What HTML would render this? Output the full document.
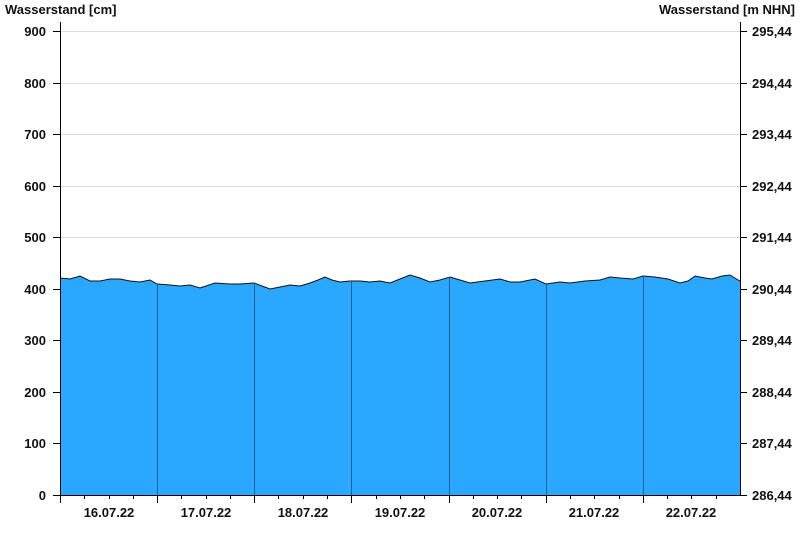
<!DOCTYPE html>
<html><head><style>body{margin:0;background:#fff}svg{display:block}text{font-family:"Liberation Sans",Arial,sans-serif;font-weight:bold;font-size:13px;fill:#111}</style></head><body>
<svg width="800" height="550" viewBox="0 0 800 550">
<g stroke="#ddd" stroke-width="1">
<line x1="60" x2="740" y1="31.5" y2="31.5"/><line x1="60" x2="740" y1="83.5" y2="83.5"/><line x1="60" x2="740" y1="134.5" y2="134.5"/><line x1="60" x2="740" y1="186.5" y2="186.5"/><line x1="60" x2="740" y1="237.5" y2="237.5"/>
</g>
<polygon fill="#2aa8ff" stroke="none" points="60,495 60,278 70,279 80,276 90,281 100,281 110,279 120,279 130,281 140,282 150,280 157,284 170,285 180,286 190,285 200,288 215,283 230,284 240,284 254,283 262,286 270,289 280,287 290,285 300,286 310,283 318,280 325,277 332,280 340,282 350,281 360,281 370,282 380,281 390,283 400,279 410,275 420,278 430,282 440,280 450,277 460,280 470,283 485,281 500,279 510,282 520,282 535,279 546,284 560,282 570,283 585,281 600,280 610,277 620,278 633,279 643,276 655,277 668,279 680,283 688,281 695,276 705,278 712,279 722,276 730,275 738,280 740,281 740,495"/>
<polyline fill="none" stroke="#111" stroke-width="1" points="60,278 70,279 80,276 90,281 100,281 110,279 120,279 130,281 140,282 150,280 157,284 170,285 180,286 190,285 200,288 215,283 230,284 240,284 254,283 262,286 270,289 280,287 290,285 300,286 310,283 318,280 325,277 332,280 340,282 350,281 360,281 370,282 380,281 390,283 400,279 410,275 420,278 430,282 440,280 450,277 460,280 470,283 485,281 500,279 510,282 520,282 535,279 546,284 560,282 570,283 585,281 600,280 610,277 620,278 633,279 643,276 655,277 668,279 680,283 688,281 695,276 705,278 712,279 722,276 730,275 738,280 740,281"/>
<g stroke="#1d5f8a" stroke-width="1">
<line x1="157.5" x2="157.5" y1="284" y2="495"/><line x1="254.5" x2="254.5" y1="283" y2="495"/><line x1="351.5" x2="351.5" y1="281" y2="495"/><line x1="449.5" x2="449.5" y1="277" y2="495"/><line x1="546.5" x2="546.5" y1="284" y2="495"/><line x1="643.5" x2="643.5" y1="276" y2="495"/>
</g>
<g stroke="#000" stroke-width="1">
<line x1="60.5" x2="60.5" y1="22" y2="503"/><line x1="740.5" x2="740.5" y1="22" y2="495"/><line x1="53" x2="740" y1="495.5" y2="495.5"/>
<line x1="53" x2="60" y1="31.5" y2="31.5"/><line x1="53" x2="60" y1="83.5" y2="83.5"/><line x1="53" x2="60" y1="134.5" y2="134.5"/><line x1="53" x2="60" y1="186.5" y2="186.5"/><line x1="53" x2="60" y1="237.5" y2="237.5"/><line x1="53" x2="60" y1="289.5" y2="289.5"/><line x1="53" x2="60" y1="340.5" y2="340.5"/><line x1="53" x2="60" y1="392.5" y2="392.5"/><line x1="53" x2="60" y1="443.5" y2="443.5"/>
<line x1="740" x2="747" y1="31.5" y2="31.5"/><line x1="740" x2="747" y1="83.5" y2="83.5"/><line x1="740" x2="747" y1="134.5" y2="134.5"/><line x1="740" x2="747" y1="186.5" y2="186.5"/><line x1="740" x2="747" y1="237.5" y2="237.5"/><line x1="740" x2="747" y1="289.5" y2="289.5"/><line x1="740" x2="747" y1="340.5" y2="340.5"/><line x1="740" x2="747" y1="392.5" y2="392.5"/><line x1="740" x2="747" y1="443.5" y2="443.5"/><line x1="740" x2="747" y1="495.5" y2="495.5"/>
<line x1="157.5" x2="157.5" y1="495" y2="503"/><line x1="254.5" x2="254.5" y1="495" y2="503"/><line x1="351.5" x2="351.5" y1="495" y2="503"/><line x1="449.5" x2="449.5" y1="495" y2="503"/><line x1="546.5" x2="546.5" y1="495" y2="503"/><line x1="643.5" x2="643.5" y1="495" y2="503"/>
<line x1="84.5" x2="84.5" y1="495" y2="499"/><line x1="109.5" x2="109.5" y1="495" y2="499"/><line x1="133.5" x2="133.5" y1="495" y2="499"/>
<line x1="181.5" x2="181.5" y1="495" y2="499"/><line x1="206.5" x2="206.5" y1="495" y2="499"/><line x1="230.5" x2="230.5" y1="495" y2="499"/>
<line x1="278.5" x2="278.5" y1="495" y2="499"/><line x1="303.5" x2="303.5" y1="495" y2="499"/><line x1="327.5" x2="327.5" y1="495" y2="499"/>
<line x1="376.5" x2="376.5" y1="495" y2="499"/><line x1="400.5" x2="400.5" y1="495" y2="499"/><line x1="424.5" x2="424.5" y1="495" y2="499"/>
<line x1="473.5" x2="473.5" y1="495" y2="499"/><line x1="497.5" x2="497.5" y1="495" y2="499"/><line x1="521.5" x2="521.5" y1="495" y2="499"/>
<line x1="570.5" x2="570.5" y1="495" y2="499"/><line x1="594.5" x2="594.5" y1="495" y2="499"/><line x1="619.5" x2="619.5" y1="495" y2="499"/>
<line x1="667.5" x2="667.5" y1="495" y2="499"/><line x1="691.5" x2="691.5" y1="495" y2="499"/><line x1="716.5" x2="716.5" y1="495" y2="499"/>
</g>
<text x="5" y="14">Wasserstand [cm]</text>
<text x="795" y="14" text-anchor="end">Wasserstand [m NHN]</text>
<g text-anchor="end">
<text x="46" y="36">900</text><text x="46" y="88">800</text><text x="46" y="139">700</text><text x="46" y="191">600</text><text x="46" y="242">500</text><text x="46" y="294">400</text><text x="46" y="345">300</text><text x="46" y="397">200</text><text x="46" y="448">100</text><text x="46" y="500">0</text>
</g>
<g>
<text x="752" y="36">295,44</text><text x="752" y="88">294,44</text><text x="752" y="139">293,44</text><text x="752" y="191">292,44</text><text x="752" y="242">291,44</text><text x="752" y="294">290,44</text><text x="752" y="345">289,44</text><text x="752" y="397">288,44</text><text x="752" y="448">287,44</text><text x="752" y="500">286,44</text>
</g>
<g text-anchor="middle">
<text x="109" y="517">16.07.22</text><text x="206" y="517">17.07.22</text><text x="303" y="517">18.07.22</text><text x="400" y="517">19.07.22</text><text x="497" y="517">20.07.22</text><text x="594" y="517">21.07.22</text><text x="691" y="517">22.07.22</text>
</g>
</svg>
</body></html>
